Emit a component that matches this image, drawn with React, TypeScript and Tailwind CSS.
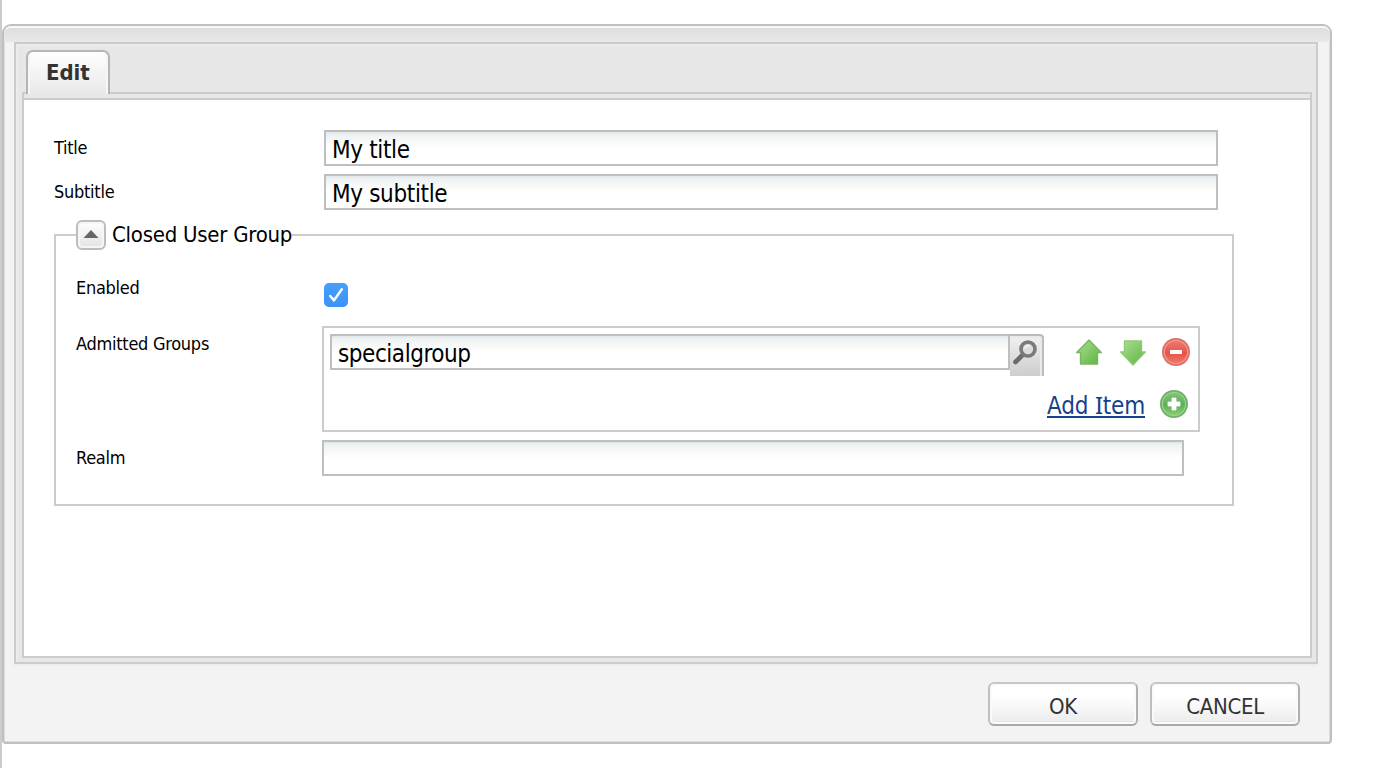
import type { ReactNode } from "react";

const uiFont =
  "font-['DejaVu_Sans_Condensed','DejaVu_Sans','Noto_Sans',sans-serif] [font-stretch:condensed]";

const inputClass =
  "block h-9 border-2 border-[#bfbfbf] bg-[linear-gradient(to_bottom,#dde4e8_0px,#ecf0f0_2px,#f5f8f7_8px,#ffffff_17px)] px-1.5 pt-1 text-[24px] leading-[28px] text-black outline-none";

function Label({ children, className }: { children: ReactNode; className: string }) {
  return (
    <div className={`shrink-0 text-[18px] leading-6 tracking-[-0.27px] text-black whitespace-nowrap ${className}`}>
      {children}
    </div>
  );
}

function ArrowIcon({ down = false }: { down?: boolean }) {
  return (
    <svg width="28" height="28" viewBox="0 0 28 28">
      <defs>
        <linearGradient id={down ? "arrowDown" : "arrowUp"} x1="0" y1="0" x2="1" y2="1">
          <stop offset="0" stopColor="#addf97" />
          <stop offset="1" stopColor="#5cb33c" />
        </linearGradient>
      </defs>
      <path
        d={
          down
            ? "M5.5 3 H22.5 V14 H26.3 L14 27 L1.7 14 H5.5 Z"
            : "M14 2 L26.3 14.5 H22.5 V26 H5.5 V14.5 H1.7 Z"
        }
        fill={down ? "url(#arrowDown)" : "url(#arrowUp)"}
        stroke={down ? "#8dca77" : "#77b562"}
        strokeWidth="1.4"
        strokeLinejoin="round"
      />
    </svg>
  );
}

function RoundIcon({ kind }: { kind: "add" | "remove" }) {
  const add = kind === "add";
  return (
    <svg width="30" height="30" viewBox="0 0 30 30">
      <defs>
        <linearGradient id={kind} x1="0" y1="0" x2="0" y2="1">
          <stop offset="0" stopColor={add ? "#82c577" : "#ee7b70"} />
          <stop offset="0.55" stopColor={add ? "#61ad57" : "#e65348"} />
          <stop offset="1" stopColor={add ? "#88d071" : "#f07c6b"} />
        </linearGradient>
      </defs>
      <circle cx="15" cy="15" r="14" fill={add ? "#72ae6b" : "#dd7069"} />
      <circle cx="15" cy="15" r="11.6" fill={`url(#${kind})`} stroke={add ? "#9bd090" : "#f2958d"} strokeWidth="1.2" />
      {add ? (
        <path
          d="M13 9h4v4h4v4h-4v4h-4v-4H9v-4h4z"
          fill="#fff"
          stroke="#fff"
          strokeWidth="0.8"
          strokeLinejoin="round"
        />
      ) : (
        <path d="M9 13h12v4H9z" fill="#fff" />
      )}
    </svg>
  );
}

function DialogButton({ children }: { children: ReactNode }) {
  return (
    <button className="flex h-11 w-[150px] items-center justify-center rounded-[6px] border-2 border-t-[#c6c6c6] border-r-[#b0b0b0] border-b-[#a9a9a9] border-l-[#bebebe] bg-linear-to-b from-white from-30% to-[#ebebeb] pt-1.5 shadow-[inset_0_0_0_2px_#fafafa,inset_0_-3px_0_0_#e4e4e4]">
      <span className="text-[22px] leading-7 tracking-[-0.3px] text-[#333]">{children}</span>
    </button>
  );
}

function GroupEditor() {
  return (
    <div className="h-[106px] w-[878px] border-2 border-[#ccc] pt-1.5 pl-1.5">
      <div className="flex h-[42px] items-start">
        <input
          aria-label="Admitted group"
          defaultValue="specialgroup"
          className={`${inputClass} w-[680px] tracking-[-0.45px]`}
        />
        <button
          aria-label="Search"
          className="h-[42px] w-[34px] rounded-tr-[4px] border-t-2 border-r-2 border-[#bcbcbc] bg-linear-to-b from-[#f1f1f1] to-[#cdcdcd] shadow-[inset_-2px_2px_0_#e9e9e9]"
        >
          <svg width="32" height="40" viewBox="0 0 32 40">
            <path d="M12.5 19 L5.5 26" stroke="#6b6b6b" strokeWidth="4.6" strokeLinecap="round" />
            <circle cx="18" cy="13" r="7" fill="#dcdcdc" stroke="#7a7a7a" strokeWidth="3.6" />
            <path d="M15 12.5a3.5 3.5 0 0 1 4.5-2.5" stroke="#f5f5f5" strokeWidth="1.8" fill="none" />
          </svg>
        </button>
        <div className="flex items-center pt-[3px] pl-[31px]">
          <ArrowIcon />
          <div className="w-4" />
          <ArrowIcon down />
          <div className="w-3.5" />
          <RoundIcon kind="remove" />
        </div>
      </div>
      <div className="flex items-start justify-end pt-[13px] pr-[9px]">
        <a className="h-[29px] border-b-2 border-[#15428b] text-[24px] leading-[32px] tracking-[-0.2px] text-[#15428b]">
          Add <span className="font-['Noto_Sans',sans-serif]">I</span>tem
        </a>
        <div className="w-3.5" />
        <RoundIcon kind="add" />
      </div>
    </div>
  );
}

function ClosedUserGroup() {
  return (
    <section className="mt-2.5 w-[1180px]">
      <div className="flex h-[30px] items-end">
        <div className="h-4 w-[22px] border-t-2 border-l-2 border-[#ccc]" />
        <button
          aria-label="Collapse"
          className="flex h-[30px] w-[30px] items-center justify-center rounded-[6px] border-2 border-[#bdbdbd] bg-linear-to-b from-white to-[#e3e3e3] shadow-[inset_0_0_0_2px_#f6f6f6]"
        >
          <svg width="16" height="10" viewBox="0 0 16 10">
            <path d="M8 0 L15.5 8 H0.5 Z" fill="#666" />
          </svg>
        </button>
        <div className="h-[30px] w-[186px] pl-1.5 text-[22px] leading-[29px] tracking-[-0.25px] whitespace-nowrap">
          Closed User Group
        </div>
        <div className="h-4 flex-1 border-t-2 border-r-2 border-[#ccc]" />
      </div>
      <div className="h-64 border-x-2 border-b-2 border-[#ccc] pl-5">
        <div className="flex h-[76px]">
          <Label className="w-[248px] pt-[26px]">Enabled</Label>
          <div className="mt-[33px] flex h-6 w-6 items-center justify-center rounded-[5px] bg-linear-to-b from-[#459ffb] to-[#3b93f7]">
            <svg width="20" height="20" viewBox="0 0 20 20">
              <path
                d="M4.2 11 L8 15.4 L15.8 4.2"
                fill="none"
                stroke="#fff"
                strokeWidth="2.5"
                strokeLinecap="round"
                strokeLinejoin="round"
              />
            </svg>
          </div>
        </div>
        <div className="flex h-[114px]">
          <Label className="w-[246px] pt-1.5">Admitted Groups</Label>
          <GroupEditor />
        </div>
        <div className="flex">
          <Label className="w-[246px] pt-1.5">Realm</Label>
          <input aria-label="Realm" className={`${inputClass} w-[862px]`} />
        </div>
      </div>
    </section>
  );
}

export default function App() {
  return (
    <div className={`h-[768px] w-[1382px] overflow-hidden border-l-2 border-[#ccc] bg-white pt-6 ${uiFont}`}>
      <div className="h-[720px] w-[1330px] rounded-t-[9px] rounded-b-[4px] border-2 border-[#bfbfbf] bg-[#f3f3f3] shadow-[inset_0_0_0_1px_#dedede]">
        <div className="h-4 rounded-t-[7px] border-t-2 border-[#f8f8f8] bg-linear-to-b from-[#dedede] to-[#e8e8e8]" />
        <div className="ml-2.5 h-[622px] w-[1304px] border-2 border-[#ccc] bg-[#e7e7e7] px-1.5 pt-1.5 shadow-[0_2px_0_#ededed,inset_2px_2px_0_#ececec]">
          <div className="flex h-[42px] pl-1">
            <div className="relative z-10 h-11 w-[84px] rounded-t-[7px] border-x-2 border-t-2 border-[#b5b5b5] bg-linear-to-b from-white to-[#e8e8e8] pt-[7px] pl-[18px] text-[22px] leading-7 font-bold tracking-[-0.1px] text-[#333] shadow-[inset_2px_0_0_#f6f6f6,inset_-2px_0_0_#f6f6f6]">
              Edit
            </div>
          </div>
          <div className="h-[566px] w-[1290px] border-x-2 border-t-2 border-b-2 border-[#ccc]">
            <div className="h-1.5 border-b-2 border-[#ccc] bg-[#e7e7e7]" />
            <div className="h-[556px] bg-white pt-[30px] pl-[30px]">
              <div className="flex h-11">
                <Label className="w-[270px] pt-1.5">Title</Label>
                <input
                  aria-label="Title"
                  defaultValue="My title"
                  className={`${inputClass} w-[894px] tracking-[-0.35px]`}
                />
              </div>
              <div className="flex">
                <Label className="w-[270px] pt-1.5">Subtitle</Label>
                <input
                  aria-label="Subtitle"
                  defaultValue="My subtitle"
                  className={`${inputClass} w-[894px] tracking-[-0.35px]`}
                />
              </div>
              <ClosedUserGroup />
            </div>
          </div>
        </div>
        <div className="flex justify-end gap-3 pt-[18px] pr-[30px]">
          <DialogButton>OK</DialogButton>
          <DialogButton>CANCEL</DialogButton>
        </div>
      </div>
    </div>
  );
}
